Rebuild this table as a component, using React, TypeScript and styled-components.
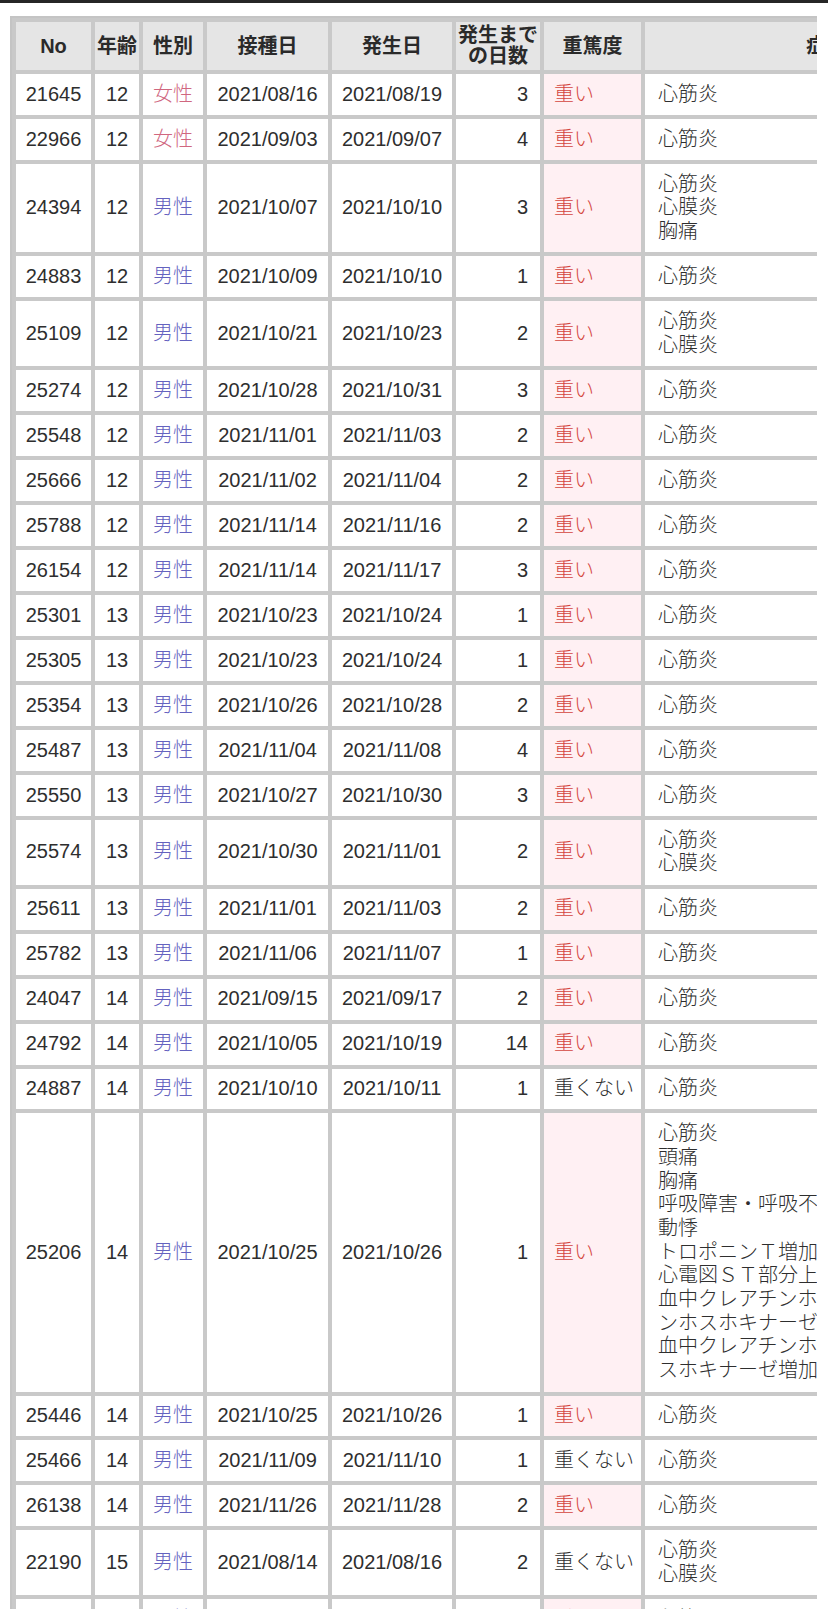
import React from "react";
import styled, { createGlobalStyle, css } from "styled-components";

const Global = createGlobalStyle`
  html, body { margin: 0; padding: 0; background: #ffffff; }
  body {
    font-family: "Liberation Sans", Arial, "Noto Sans CJK JP", sans-serif;
    color: #333333;
  }
`;

const TopBar = styled.div`
  height: 3px;
  background: #262626;
`;

const Wrapper = styled.div`
  margin: 13px 11px 0 10px;
  overflow: hidden;
`;

const Table = styled.table`
  table-layout: fixed;
  width: 1003px;
  border-collapse: separate;
  border-spacing: 4px;
  background: #c9c9c9;
  border: 2px solid #c4c4c4;
  font-size: 20px;
`;

const Th = styled.th<{ $w: number }>`
  box-sizing: border-box;
  width: ${(p) => p.$w}px;
  height: 48px;
  background: #e5e5e5;
  font-weight: bold;
  text-align: center;
  vertical-align: middle;
  line-height: 21px;
  padding: 3px 2px;
  color: #2a2a2a;
  white-space: nowrap;
`;

type Align = "center" | "right" | "left";
type Tone = "female" | "male" | "severe";

const Td = styled.td<{ $align?: Align; $pad?: number; $tone?: Tone }>`
  box-sizing: border-box;
  background: #ffffff;
  text-align: ${(p) => p.$align || "center"};
  vertical-align: middle;
  line-height: 23.7px;
  padding: 8.65px ${(p) => p.$pad ?? 4}px;
  white-space: nowrap;
  overflow: hidden;
  font-weight: 300;
  color: #2e2e2e;
  ${(p) =>
    p.$tone === "female" &&
    css`
      color: #d0677f;
    `}
  ${(p) =>
    p.$tone === "male" &&
    css`
      color: #6462bf;
    `}
  ${(p) =>
    p.$tone === "severe" &&
    css`
      color: #d4463f;
      background: #fff0f3;
    `}
`;

type Row = {
  no: string;
  age: number;
  sex: "女性" | "男性";
  vac: string;
  onset: string;
  days: number;
  severe: boolean;
  sym: string[];
};

const M = "心筋炎";
const P = "心膜炎";

const r = (
  no: string,
  age: number,
  sex: "女性" | "男性",
  vac: string,
  onset: string,
  days: number,
  severe: boolean,
  sym: string[] = [M]
): Row => ({ no, age, sex, vac, onset, days, severe, sym });

const rows: Row[] = [
  r("21645", 12, "女性", "2021/08/16", "2021/08/19", 3, true),
  r("22966", 12, "女性", "2021/09/03", "2021/09/07", 4, true),
  r("24394", 12, "男性", "2021/10/07", "2021/10/10", 3, true, [M, P, "胸痛"]),
  r("24883", 12, "男性", "2021/10/09", "2021/10/10", 1, true),
  r("25109", 12, "男性", "2021/10/21", "2021/10/23", 2, true, [M, P]),
  r("25274", 12, "男性", "2021/10/28", "2021/10/31", 3, true),
  r("25548", 12, "男性", "2021/11/01", "2021/11/03", 2, true),
  r("25666", 12, "男性", "2021/11/02", "2021/11/04", 2, true),
  r("25788", 12, "男性", "2021/11/14", "2021/11/16", 2, true),
  r("26154", 12, "男性", "2021/11/14", "2021/11/17", 3, true),
  r("25301", 13, "男性", "2021/10/23", "2021/10/24", 1, true),
  r("25305", 13, "男性", "2021/10/23", "2021/10/24", 1, true),
  r("25354", 13, "男性", "2021/10/26", "2021/10/28", 2, true),
  r("25487", 13, "男性", "2021/11/04", "2021/11/08", 4, true),
  r("25550", 13, "男性", "2021/10/27", "2021/10/30", 3, true),
  r("25574", 13, "男性", "2021/10/30", "2021/11/01", 2, true, [M, P]),
  r("25611", 13, "男性", "2021/11/01", "2021/11/03", 2, true),
  r("25782", 13, "男性", "2021/11/06", "2021/11/07", 1, true),
  r("24047", 14, "男性", "2021/09/15", "2021/09/17", 2, true),
  r("24792", 14, "男性", "2021/10/05", "2021/10/19", 14, true),
  r("24887", 14, "男性", "2021/10/10", "2021/10/11", 1, false),
  r("25206", 14, "男性", "2021/10/25", "2021/10/26", 1, true, [
    M,
    "頭痛",
    "胸痛",
    "呼吸障害・呼吸不全",
    "動悸",
    "トロポニンＴ増加",
    "心電図ＳＴ部分上昇",
    "血中クレアチンホスホキナーゼＭＢ増加・クレアチ",
    "ンホスホキナーゼＭＢ増加",
    "血中クレアチンホスホキナーゼ異常・クレアチンホ",
    "スホキナーゼ増加",
  ]),
  r("25446", 14, "男性", "2021/10/25", "2021/10/26", 1, true),
  r("25466", 14, "男性", "2021/11/09", "2021/11/10", 1, false),
  r("26138", 14, "男性", "2021/11/26", "2021/11/28", 2, true),
  r("22190", 15, "男性", "2021/08/14", "2021/08/16", 2, false, [M, P]),
  r("23398", 15, "男性", "2021/09/11", "2021/09/13", 2, true),
];

const headers: { label: React.ReactNode; w: number }[] = [
  { label: "No", w: 75 },
  { label: "年齢", w: 44 },
  { label: "性別", w: 60 },
  { label: "接種日", w: 121 },
  { label: "発生日", w: 120 },
  {
    label: (
      <>
        発生まで
        <br />
        の日数
      </>
    ),
    w: 84,
  },
  { label: "重篤度", w: 97 },
  { label: "症状", w: 362 },
];

export default function App() {
  return (
    <>
      <Global />
      <TopBar />
      <Wrapper>
        <Table>
          <thead>
            <tr>
              {headers.map((h, i) => (
                <Th key={i} $w={h.w}>
                  {h.label}
                </Th>
              ))}
            </tr>
          </thead>
          <tbody>
            {rows.map((row) => (
              <tr key={row.no}>
                <Td>{row.no}</Td>
                <Td>{row.age}</Td>
                <Td $tone={row.sex === "女性" ? "female" : "male"}>{row.sex}</Td>
                <Td>{row.vac}</Td>
                <Td>{row.onset}</Td>
                <Td $align="right" $pad={12}>
                  {row.days}
                </Td>
                <Td $align="left" $pad={10} $tone={row.severe ? "severe" : undefined}>
                  {row.severe ? "重い" : "重くない"}
                </Td>
                <Td $align="left" $pad={13}>
                  {row.sym.map((s, i) => (
                    <React.Fragment key={i}>
                      {i > 0 && <br />}
                      {s}
                    </React.Fragment>
                  ))}
                </Td>
              </tr>
            ))}
          </tbody>
        </Table>
      </Wrapper>
    </>
  );
}
